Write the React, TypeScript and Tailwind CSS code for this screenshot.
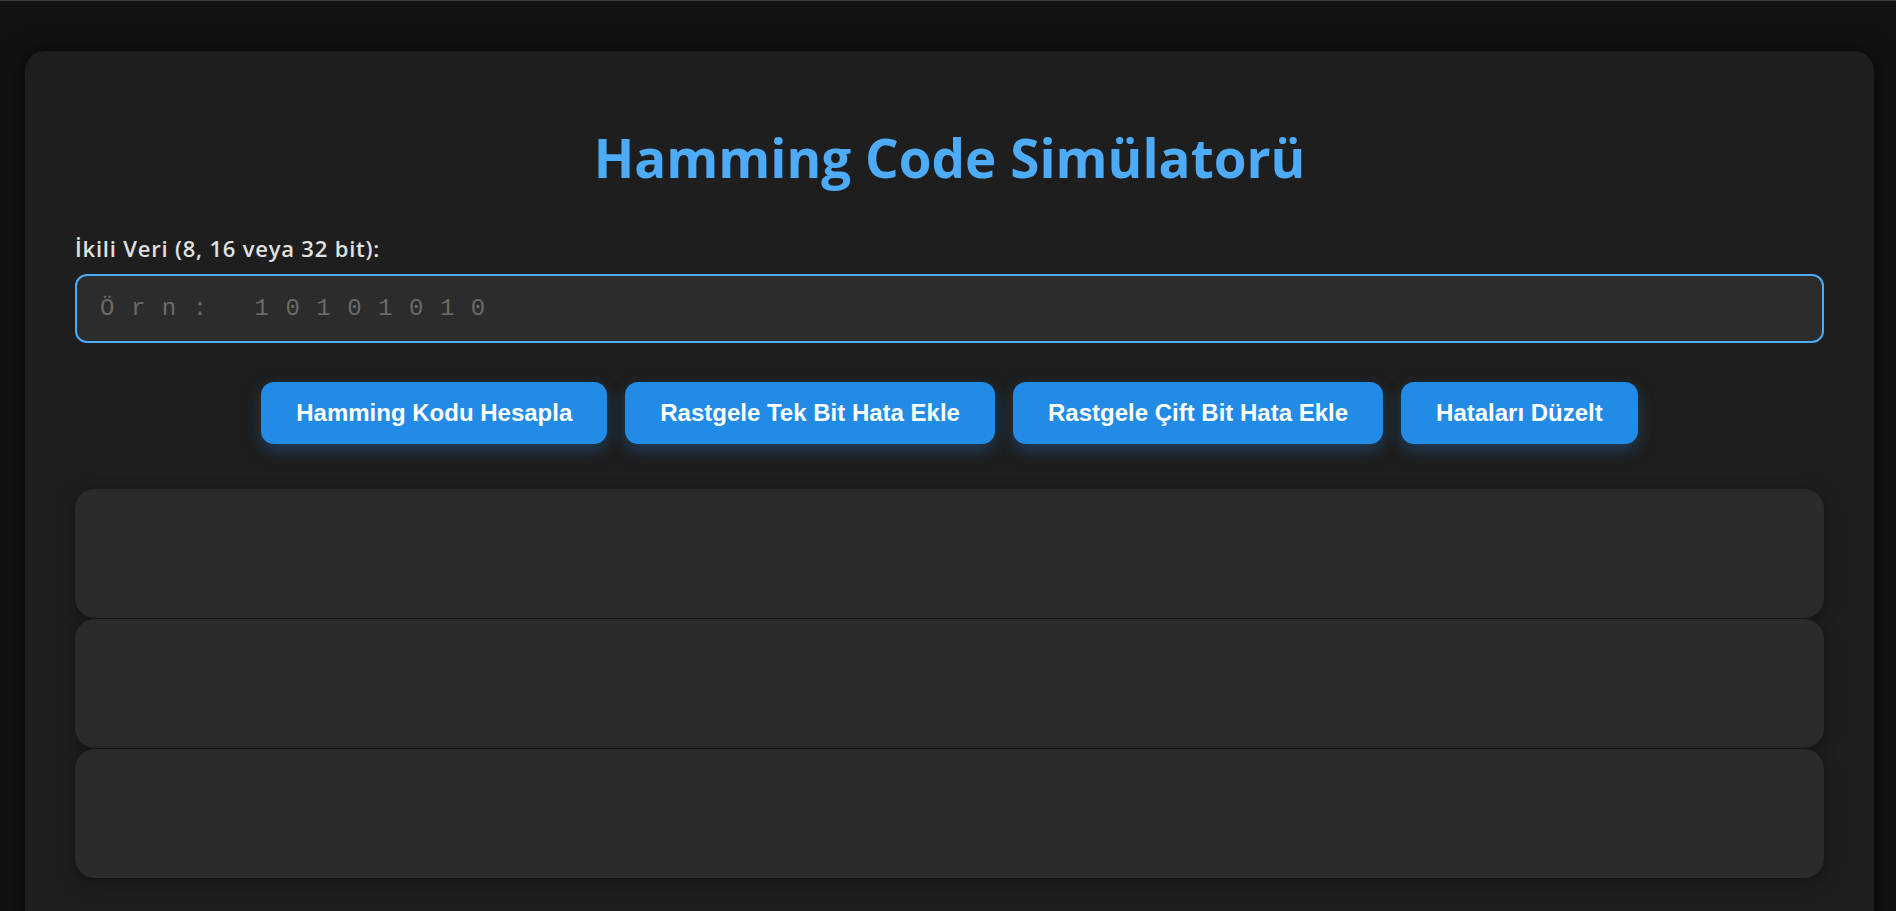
export default function App() {
  const buttons = [
    "Hamming Kodu Hesapla",
    "Rastgele Tek Bit Hata Ekle",
    "Rastgele Çift Bit Hata Ekle",
    "Hataları Düzelt",
  ];

  return (
    <div className="min-h-screen h-[911px] overflow-hidden bg-[#121212] border-t border-[#3a3a3a]">
      <div className="ml-[25px] mt-[50px] w-[1849px] h-[900px] rounded-[20px] bg-[#1e1e1e] shadow-[0_0_25px_rgba(0,0,0,0.6)] px-[50px] pt-[77px]">
        {/* Title */}
        <h1 className="text-center text-[53px] leading-[60px] font-bold text-[#4dabf7] font-['Open_Sans',sans-serif]">
          Hamming Code Simülatorü
        </h1>

        {/* Input */}
        <label className="block mt-[46px] text-[22px] leading-[28px] tracking-[0.8px] font-semibold text-[#e0e0e0] font-['Open_Sans',sans-serif]">
          İkili Veri (8, 16 veya 32 bit):
        </label>
        <input
          type="text"
          placeholder="Örn: 10101010"
          className="mt-[12px] block w-full h-[69px] rounded-[12px] border-2 border-[#4dabf7] bg-[#2c2c2c] pl-[23px] text-[24px] tracking-[16.5px] text-[#ddd] placeholder:text-[#6a6a6a] outline-none font-['Liberation_Mono',monospace]"
        />

        {/* Buttons */}
        <div className="mt-[39px] flex justify-center gap-[18px]">
          {buttons.map((b) => (
            <button
              key={b}
              className="h-[62px] px-[35px] rounded-[13px] bg-[#228be6] text-white text-[24px] font-bold font-['Liberation_Sans',Arial,sans-serif] shadow-[0_6px_16px_rgba(34,139,230,0.3)]"
            >
              {b}
            </button>
          ))}
        </div>

        {/* Result panels */}
        <div className="mt-[45px] flex flex-col gap-px">
          <div className="h-[129px] rounded-[20px] bg-[#2b2b2b] shadow-[0_4px_15px_rgba(0,0,0,0.35)]" />
          <div className="h-[129px] rounded-[20px] bg-[#2b2b2b] shadow-[0_4px_15px_rgba(0,0,0,0.35)]" />
          <div className="h-[129px] rounded-[20px] bg-[#2b2b2b] shadow-[0_4px_15px_rgba(0,0,0,0.35)]" />
        </div>
      </div>
    </div>
  );
}
